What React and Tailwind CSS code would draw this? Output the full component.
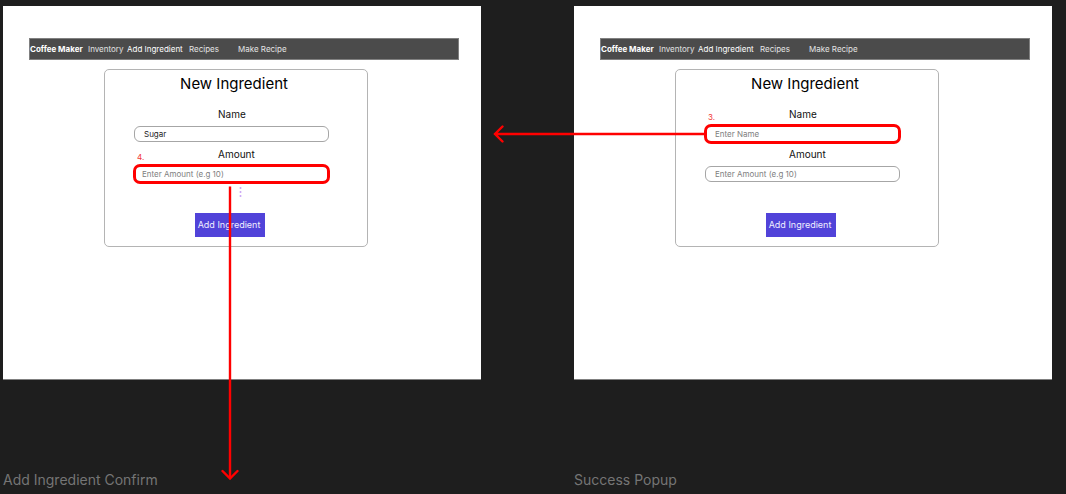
import { useId } from "react";

const links = [
  { label: "Inventory", style: "w-[39px]" },
  { label: "Add Ingredient", style: "w-[62px] text-white" },
  { label: "Recipes", style: "w-[49px]" },
  { label: "Make Recipe", style: "" },
];

function NavBar() {
  return (
    <nav className="ml-[26px] mr-[22px] flex h-[22px] items-center border border-[#808080] bg-[#4b4b4b] text-[8px] text-[#e4e4e4]">
      <a href="#home" className="w-[58px] whitespace-nowrap font-bold text-white">
        Coffee Maker
      </a>
      {links.map((link) => (
        <a key={link.label} href="#nav" className={"whitespace-nowrap " + link.style}>
          {link.label}
        </a>
      ))}
    </nav>
  );
}

function Highlight() {
  return (
    <span className="pointer-events-none absolute -inset-x-px -inset-y-[2px] rounded-[7px] border-3 border-[#ff0000]" />
  );
}

function LeftArrow() {
  return (
    <svg
      className="pointer-events-none absolute right-full top-1/2 -translate-y-1/2"
      width="212"
      height="20"
      viewBox="0 0 212 20"
      fill="none"
      stroke="#ff0000"
      strokeWidth="2.4"
      strokeLinecap="round"
      aria-hidden="true"
    >
      <path d="M212 10H2M9.500 2.500L2 10L9.500 17.500" />
    </svg>
  );
}

function DownArrow() {
  return (
    <svg
      className="pointer-events-none absolute left-[86px] top-full z-10 mt-1"
      width="20"
      height="294"
      viewBox="0 0 20 294"
      fill="none"
      stroke="#ff0000"
      strokeWidth="2.4"
      aria-hidden="true"
    >
      <path d="M10 0.500V292" />
      <path d="M2.500 285L10 292.500L17.500 285" strokeLinecap="round" />
    </svg>
  );
}

function Dots() {
  return (
    <svg
      className="pointer-events-none absolute left-[105px] top-full mt-1"
      width="3"
      height="12"
      viewBox="0 0 3 12"
      fill="#c9a4f5"
      aria-hidden="true"
    >
      <circle cx="1.5" cy="2" r="1" />
      <circle cx="1.5" cy="6" r="1" />
      <circle cx="1.5" cy="10" r="1" />
    </svg>
  );
}

function Field({ label, placeholder, value, step, indent = "pl-[9px]", children }) {
  const id = useId();
  return (
    <div className="relative flex flex-col">
      <label htmlFor={id} className="pl-[84px] text-[10px] leading-4 text-[#111111]">
        {label}
      </label>
      {step && (
        <span className="absolute left-[3px] top-[5px] text-[8px] leading-3 text-[#f23535]">{step}</span>
      )}
      <div className="relative mt-1 flex">
        <input
          id={id}
          type="text"
          defaultValue={value}
          placeholder={placeholder}
          className={
            "h-4 w-full rounded-[6px] border border-[#a6a6a6] bg-white text-[8px] text-[#222222] outline-none placeholder:text-[#808080] " +
            indent
          }
        />
        {children}
      </div>
    </div>
  );
}

function Screen({ children }) {
  return (
    <section className="border-b border-[#808080] bg-white pb-[132px] pt-8">
      <NavBar />
      <div className="pl-[101px] pr-[113px] pt-[9px]">
        <form className="flex flex-col rounded-[5px] border border-[#b4b4b4] px-[29px] pb-[9px] pt-1">
          <h1 className="-ml-1 text-center text-[15px] leading-5 text-black">New Ingredient</h1>
          <div className="mr-[9px] mt-3 flex flex-col gap-1">{children}</div>
          <button
            type="button"
            className="ml-[61px] mt-[31px] h-6 w-[70px] whitespace-nowrap bg-[#5143d9] pr-[2px] text-[9px] text-[#f0eeff]"
          >
            Add Ingredient
          </button>
        </form>
      </div>
    </section>
  );
}

function FrameTitle({ children }) {
  return <h2 className="text-[14px] leading-5 text-[#757575]">{children}</h2>;
}

export default function App() {
  return (
    <main className="min-h-screen overflow-hidden bg-[#1e1e1e] font-['Inter',sans-serif]">
      <div className="grid grid-cols-2 gap-x-[93px] gap-y-[90px] pb-1 pl-[3px] pr-[14px] pt-[6px]">
        <Screen>
          <Field label="Name" placeholder="Enter Name" value="Sugar" />
          <Field label="Amount" placeholder="Enter Amount (e.g 10)" step="4." indent="pl-[7px]">
            <Highlight />
            <Dots />
            <DownArrow />
          </Field>
        </Screen>
        <Screen>
          <Field label="Name" placeholder="Enter Name" step="3.">
            <Highlight />
            <LeftArrow />
          </Field>
          <Field label="Amount" placeholder="Enter Amount (e.g 10)" />
        </Screen>
        <FrameTitle>Add Ingredient Confirm</FrameTitle>
        <FrameTitle>Success Popup</FrameTitle>
      </div>
    </main>
  );
}
